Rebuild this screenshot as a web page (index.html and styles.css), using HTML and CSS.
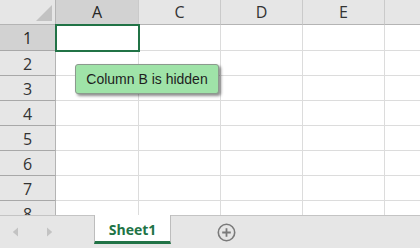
FILE: index.html
```html
<!DOCTYPE html>
<html>
<head>
<meta charset="utf-8">
<link rel="stylesheet" href="styles.css">
</head>
<body>
<div class="app">
  <div class="sheet">
    <div class="grid">
      <div class="hd corner"></div>
      <div class="hd col sel">A</div>
      <div class="hd col">C</div>
      <div class="hd col">D</div>
      <div class="hd col">E</div>
      <div class="hd col last"></div>

      <div class="hd row sel">1</div>
      <div class="cell active"></div><div class="cell"></div><div class="cell"></div><div class="cell"></div><div class="cell last"></div>
      <div class="hd row">2</div>
      <div class="cell"></div><div class="cell"></div><div class="cell"></div><div class="cell"></div><div class="cell last"></div>
      <div class="hd row">3</div>
      <div class="cell"></div><div class="cell"></div><div class="cell"></div><div class="cell"></div><div class="cell last"></div>
      <div class="hd row">4</div>
      <div class="cell"></div><div class="cell"></div><div class="cell"></div><div class="cell"></div><div class="cell last"></div>
      <div class="hd row">5</div>
      <div class="cell"></div><div class="cell"></div><div class="cell"></div><div class="cell"></div><div class="cell last"></div>
      <div class="hd row">6</div>
      <div class="cell"></div><div class="cell"></div><div class="cell"></div><div class="cell"></div><div class="cell last"></div>
      <div class="hd row">7</div>
      <div class="cell"></div><div class="cell"></div><div class="cell"></div><div class="cell"></div><div class="cell last"></div>
      <div class="hd row">8</div>
      <div class="cell"></div><div class="cell"></div><div class="cell"></div><div class="cell"></div><div class="cell last"></div>
    </div>
    <div class="tooltip">Column B is hidden</div>
  </div>
  <div class="tabbar">
    <div class="nav">
      <svg class="arrow" width="7" height="10" viewBox="0 0 7 10"><path d="M6 0.5 L0.8 5 L6 9.5 Z" fill="#c3c3c3"/></svg>
      <svg class="arrow" width="7" height="10" viewBox="0 0 7 10"><path d="M1 0.5 L6.2 5 L1 9.5 Z" fill="#c3c3c3"/></svg>
    </div>
    <div class="tab">Sheet1</div>
    <div class="add">
      <svg width="19" height="19" viewBox="0 0 19 19"><circle cx="9.5" cy="9.5" r="8.2" fill="none" stroke="#7a7a7a" stroke-width="1.6"/><path d="M9.5 5.2 V13.8 M5.2 9.5 H13.8" stroke="#7a7a7a" stroke-width="1.8"/></svg>
    </div>
  </div>
</div>
</body>
</html>
```

FILE: styles.css
```css
html, body {
  margin: 0;
  padding: 0;
  background: #ffffff;
}
.app {
  width: 420px;
  height: 248px;
  overflow: hidden;
  display: flex;
  flex-direction: column;
  font-family: "Open Sans", "Noto Sans", sans-serif;
}
.sheet {
  position: relative;
  height: 215px;
  overflow: hidden;
  flex: none;
}
.grid {
  display: grid;
  grid-template-columns: 56px 83px 82px 82px 82px 1fr;
  grid-template-rows: 25px 26px repeat(7, 25px);
}
.hd {
  box-sizing: border-box;
  background: #e6e6e6;
  color: #333333;
  font-size: 16px;
  display: flex;
  align-items: center;
  justify-content: center;
  line-height: 1;
}
.hd.col {
  border-right: 1px solid #cacaca;
  border-bottom: 1px solid #b4b4b4;
}
.hd.row {
  border-right: 1px solid #b4b4b4;
  border-bottom: 1px solid #a8a8a8;
  padding-top: 1px;
}
.hd.sel {
  background: #d2d2d2;
  color: #262626;
}
.hd.col.sel {
  border-bottom-color: #9a9a9a;
}
.corner {
  position: relative;
  border-right: 1px solid #b4b4b4;
  border-bottom: 1px solid #b4b4b4;
}
.corner::after {
  content: "";
  position: absolute;
  right: 3px;
  bottom: 3px;
  width: 0;
  height: 0;
  border-left: 16px solid transparent;
  border-bottom: 16px solid #c2c2c2;
}
.hd.col.last {
  border-right: none;
}
.cell {
  box-sizing: border-box;
  border-right: 1px solid #dcdcdc;
  border-bottom: 1px solid #dcdcdc;
  background: #ffffff;
}
.cell.last {
  border-right: none;
}
.cell.active {
  outline: 2px solid #217346;
  outline-offset: -1px;
  position: relative;
  z-index: 1;
}
.tooltip {
  position: absolute;
  left: 75px;
  top: 64px;
  width: 144px;
  height: 30px;
  box-sizing: border-box;
  background: #9fe3a8;
  border: 1px solid #8c9a8e;
  border-radius: 3px;
  box-shadow: 2px 2px 3px rgba(0, 0, 0, 0.45);
  font-family: "Liberation Sans", Arial, sans-serif;
  font-size: 14px;
  color: #1e1e1e;
  display: flex;
  align-items: center;
  justify-content: center;
  z-index: 2;
}
.tabbar {
  flex: none;
  height: 33px;
  box-sizing: border-box;
  background: #e6e6e6;
  border-top: 1px solid #c4c4c4;
  display: flex;
  align-items: flex-start;
}
.nav {
  width: 94px;
  height: 32px;
  display: flex;
  align-items: center;
  gap: 27px;
  padding-left: 12px;
  box-sizing: border-box;
}
.arrow {
  display: block;
}
.tab {
  width: 77px;
  height: 29px;
  margin-top: -1px;
  box-sizing: border-box;
  background: #ffffff;
  border-left: 1px solid #bdbdbd;
  border-right: 1px solid #bdbdbd;
  border-bottom: 3px solid #217346;
  color: #217346;
  font-weight: 700;
  font-size: 14px;
  display: flex;
  align-items: center;
  justify-content: center;
  padding-top: 2px;
}
.add {
  margin-left: 46px;
  height: 32px;
  display: flex;
  align-items: center;
}
.add svg {
  display: block;
}
```
